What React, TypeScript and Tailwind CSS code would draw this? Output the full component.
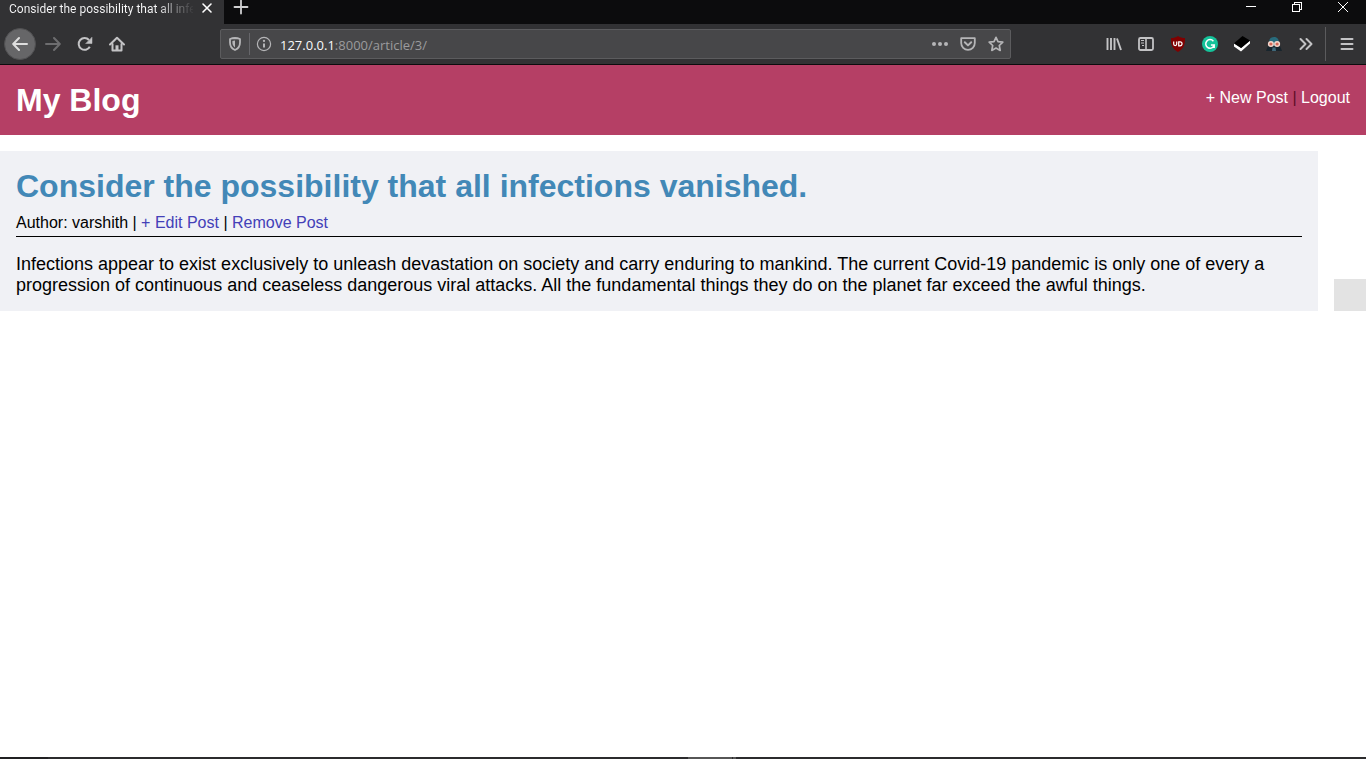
import type { ReactNode } from 'react';

function ToolButton({ label, children, className = 'text-[#c3c3c5]' }: { label: string; children: ReactNode; className?: string }) {
  return (
    <button type="button" aria-label={label} className={`flex h-8 w-8 shrink-0 items-center justify-center ${className}`}>
      {children}
    </button>
  );
}

function Svg({ children, width = 2 }: { children: ReactNode; width?: number }) {
  return (
    <svg width="16" height="16" viewBox="0 0 16 16" fill="none" stroke="currentColor" strokeWidth={width} strokeLinecap="round" strokeLinejoin="round" aria-hidden="true">
      {children}
    </svg>
  );
}

function TabStrip() {
  return (
    <div className="flex h-6 bg-[#0c0c0d] text-white">
      <div className="flex w-56 items-start bg-[#323234] pl-[9px]">
        <span className="w-[184px] bg-linear-to-r from-[#f9f9fa] from-80% to-[#3a3a3c] bg-clip-text font-[Roboto,sans-serif] text-[12px] leading-[18px] whitespace-nowrap text-transparent">
          Consider the possibility that all infe
        </span>
        <button type="button" aria-label="Close tab" className="ml-1 flex h-4 w-5 items-center justify-center">
          <Svg>
            <path d="M4 4l8 8M12 4l-8 8" strokeWidth="1.6" />
          </Svg>
        </button>
      </div>
      <button type="button" aria-label="New tab" className="flex h-[14px] w-[34px] items-center justify-center text-[#d0d0d1]">
        <Svg>
          <path d="M8 1.5v13M1.5 8h13" strokeWidth="1.8" />
        </Svg>
      </button>
      <div className="ml-auto flex h-[14px] items-center">
        <button type="button" aria-label="Minimize" className="flex w-[46px] justify-center">
          <svg width="10" height="10" viewBox="0 0 10 10" shapeRendering="crispEdges" aria-hidden="true">
            <path d="M0 4h10v1H0z" fill="#fff" />
          </svg>
        </button>
        <button type="button" aria-label="Restore" className="flex w-[46px] justify-center">
          <svg width="10" height="10" viewBox="0 0 10 10" fill="none" stroke="#fff" shapeRendering="crispEdges" aria-hidden="true">
            <path d="M.5 2.5h7v7h-7zM2.5 2.5v-2h7v7h-2" />
          </svg>
        </button>
        <button type="button" aria-label="Close window" className="flex w-[46px] justify-center">
          <svg width="10" height="10" viewBox="0 0 10 10" fill="none" stroke="#fff" aria-hidden="true">
            <path d="M0 0l10 10M10 0L0 10" />
          </svg>
        </button>
      </div>
    </div>
  );
}

function AddressBar() {
  return (
    <div className="flex h-[30px] min-w-0 flex-1 items-center rounded-xs border border-[#5c5c5e] bg-[#474749] pl-[6px] text-[#b5b5b7]">
      <button type="button" aria-label="Tracking protection">
        <Svg>
          <path d="M8 2c-1.900 .1-3.700 .5-5 1v3.500C3 10 5 12.700 8 14c3-1.300 5-4 5-7.500V3c-1.300-.5-3.100-.9-5-1z" strokeWidth="1.8" />
          <path d="M8 4.500c-1 .1-1.900 .2-2.600 .5v1.500c0 2.200 .9 3.800 2.600 5z" fill="currentColor" stroke="none" />
        </Svg>
      </button>
      <span className="ml-[6px] h-[22px] w-px bg-[#66666a]" />
      <button type="button" aria-label="Site information" className="ml-[6px]">
        <Svg width={1.2}>
          <circle cx="8" cy="8" r="6.600" />
          <path d="M8 7.500v4" strokeWidth="2" strokeLinecap="butt" />
          <circle cx="8" cy="4.900" r="1.150" fill="currentColor" stroke="none" />
        </Svg>
      </button>
      <div className="ml-2 flex-1 pt-[2px] font-['Open_Sans',sans-serif] text-[13px] leading-[18px] text-[#9b9b9d]">
        <span className="text-[#f9f9fa]">127.0.0.1</span>:8000/article/3/
      </div>
      <div className="flex gap-3 pr-[6px]">
        <button type="button" aria-label="Page actions">
          <Svg>
            <g fill="currentColor" stroke="none">
              <circle cx="2" cy="8" r="2" />
              <circle cx="8" cy="8" r="2" />
              <circle cx="14" cy="8" r="2" />
            </g>
          </Svg>
        </button>
        <button type="button" aria-label="Save to Pocket">
          <Svg>
            <path d="M1.200 2.200h13.600v4.800a6.800 6.800 0 0 1-13.600 0z" strokeWidth="1.800" />
            <path d="M4.800 6.300L8 9.400l3.200-3.100" />
          </Svg>
        </button>
        <button type="button" aria-label="Bookmark">
          <Svg>
            <path d="M8 1.300l2 4.400 4.800 .5-3.500 3.300 .9 4.900L8 12.100l-4.200 2.300 .9-4.900L1.200 6.200 6 5.700z" strokeWidth="1.700" />
          </Svg>
        </button>
      </div>
    </div>
  );
}

function Toolbar() {
  return (
    <div className="flex h-[41px] items-center border-b border-[#0c0c0d] bg-[#323234] pr-[3px] pl-1">
      <ToolButton label="Back" className="rounded-full border border-[#505052] bg-[#666668] text-[#dedede]">
        <Svg><path d="M15 8H1.500M7 2L1.200 8 7 14" /></Svg>
      </ToolButton>
      <ToolButton label="Forward" className="ml-px text-[#6d6d6f]">
        <Svg><path d="M1 8h13.500M9 2l5.800 6L9 14" /></Svg>
      </ToolButton>
      <ToolButton label="Reload">
        <Svg>
          <path d="M12.800 10.700A5.900 5.900 0 1 1 12 4" strokeLinecap="butt" />
          <path d="M15 1.500v6H9z" fill="currentColor" strokeWidth=".5" />
        </Svg>
      </ToolButton>
      <ToolButton label="Home">
        <Svg>
          <path d="M1 8.500L8 1.700l7 6.800" />
          <path d="M3.500 8v6.500h9V8" />
          <path d="M6.500 9.300h3V14h-3z" fill="currentColor" stroke="none" />
        </Svg>
      </ToolButton>
      <div className="w-[87px] shrink-0" />
      <AddressBar />
      <div className="w-[87px] shrink-0" />
      <ToolButton label="Library">
        <Svg><path d="M1.500 2v12M5 2v12M8.500 2v12M11 2.500L15 14" strokeWidth="1.900" strokeLinecap="butt" /></Svg>
      </ToolButton>
      <ToolButton label="Sidebar">
        <Svg>
          <rect x="1" y="2" width="14" height="12" rx="1.500" strokeWidth="1.800" />
          <path d="M8 2v12" strokeWidth="1.600" />
          <path d="M3 4.500h3M3 7h3M4 9.500h2" strokeWidth="1" strokeLinecap="butt" />
        </Svg>
      </ToolButton>
      <ToolButton label="Ad blocker">
        <svg width="16" height="16" viewBox="0 0 16 16" aria-hidden="true">
          <path d="M8 0c2 1.500 4.500 2 7 2 .3 7-1.500 11-7 14C2.500 13 .7 9 1 2c2.500 0 5-.5 7-2z" fill="#800000" />
          <path d="M3.700 5.500v2.600a1.500 1.500 0 0 0 3 0V5.500M8.700 5.900h1.400a1.900 1.900 0 0 1 0 3.900H8.700z" fill="none" stroke="#fff" strokeWidth="1.200" />
        </svg>
      </ToolButton>
      <ToolButton label="Grammar checker">
        <svg width="16" height="16" viewBox="0 0 16 16" aria-hidden="true">
          <circle cx="8" cy="8" r="8" fill="#15c39a" />
          <path d="M11.400 5.200A4.300 4.300 0 1 0 12.200 9H8.900M12.200 8.800V12" fill="none" stroke="#fff" strokeWidth="1.500" />
        </svg>
      </ToolButton>
      <ToolButton label="Reading list">
        <svg width="16" height="16" viewBox="0 0 16 16" aria-hidden="true">
          <path d="M0 7.500v3L7 15.500l9-8V4.800L7 12z" fill="#fff" />
          <path d="M0 7.200L8.500 0 16 4.500 7.200 12z" fill="#000" />
        </svg>
      </ToolButton>
      <ToolButton label="Privacy mask">
        <svg width="16" height="16" viewBox="0 0 16 16" aria-hidden="true">
          <path d="M3 7c0-3.500 1.500-6 5-6s5 2.500 5 6l1 4H2z" fill="#286b7c" />
          <path d="M0 15l2-5h12l2 5z" fill="#18252d" />
          <path d="M6.500 11.500L6 15h4l-.5-3.500z" fill="#40687a" />
          <circle cx="4.900" cy="8" r="3" fill="#f6d8cd" />
          <circle cx="11.100" cy="8" r="3" fill="#f6d8cd" />
          <circle cx="4.900" cy="8" r="1.600" fill="#d36657" />
          <circle cx="11.100" cy="8" r="1.600" fill="#d36657" />
        </svg>
      </ToolButton>
      <ToolButton label="More tools">
        <Svg><path d="M2.500 3l5 5-5 5M8.500 3l5 5-5 5" /></Svg>
      </ToolButton>
      <span className="mr-[5px] ml-[3px] h-[34px] w-px shrink-0 bg-[#5b5b5d]" />
      <ToolButton label="Open menu">
        <Svg><path d="M2.500 3h11M2.500 8h11M2.500 13h11" /></Svg>
      </ToolButton>
    </div>
  );
}

export default function App() {
  return (
    <div className="flex min-h-screen flex-col bg-white font-['Liberation_Sans',Arial,sans-serif] text-[16px] leading-[18px] text-black">
      <TabStrip />
      <Toolbar />
      <header className="flex h-[70px] items-center justify-between bg-[#b53f65] px-4">
        <h1 className="text-[32px] leading-9 font-bold text-white">My Blog</h1>
        <nav className="pb-1 text-[#5c0d25]">
          <a href="#new" className="text-white">+ New Post</a> | <a href="#logout" className="text-white">Logout</a>
        </nav>
      </header>
      <main className="flex flex-1 items-start pt-4">
        <article className="mr-4 min-w-0 flex-1 bg-[#f0f1f5] px-4 pt-[17px] pb-[15px]">
          <h2 className="text-[32px] leading-9 font-bold text-[#4288b7]">Consider the possibility that all infections vanished.</h2>
          <p className="mt-[10px] border-b border-black pb-1">
            Author: varshith | <a href="#edit" className="text-[#4340b8]">+ Edit Post</a> | <a href="#remove" className="text-[#4340b8]">Remove Post</a>
          </p>
          <p className="mt-[17px] text-[18px] leading-[21px]">
            Infections appear to exist exclusively to unleash devastation on society and carry enduring to mankind. The current Covid-19 pandemic is only one of every a progression of continuous and ceaseless dangerous viral attacks. All the fundamental things they do on the planet far exceed the awful things.
          </p>
        </article>
        <aside className="mt-32 h-8 w-8 shrink-0 bg-[#e3e3e3]" />
      </main>
      <footer className="flex h-[2px] bg-[#2b2b2d]">
        <div className="w-12 bg-[#202022]" />
        <div className="flex-1" />
        <div className="ml-[10px] w-11 bg-[#565656]" />
        <div className="ml-px w-[3px] bg-[#565656]" />
        <div className="flex-1" />
      </footer>
    </div>
  );
}
